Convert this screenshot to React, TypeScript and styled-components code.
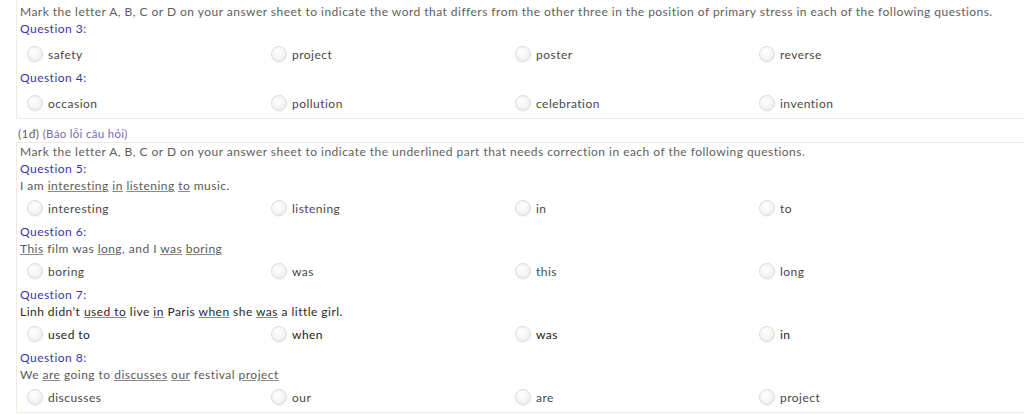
import React from "react";
import styled, { createGlobalStyle } from "styled-components";

const GlobalStyle = createGlobalStyle`
  body {
    margin: 0;
    background: #ffffff;
    font-family: "Lato", "Open Sans", sans-serif;
    font-size: 12px;
    letter-spacing: 0.47px;
    color: #555555;
  }
`;

const Page = styled.div`
  width: 1024px;
  height: 415px;
  overflow: hidden;
  padding-left: 16px;
  box-sizing: border-box;
`;

const ExerciseBox = styled.div<{ $first?: boolean }>`
  border: 1px solid #f2ebe0;
  border-right: none;
  border-top-color: ${(props) => (props.$first ? "transparent" : "#efeadf")};
  border-bottom-color: #f7e9e3;
  padding: ${(props) => (props.$first ? "2px" : "0")} 0 0 3px;
`;

const Line = styled.div`
  height: 17px;
  line-height: 17px;
  white-space: nowrap;
`;

const Instruction = styled(Line)`
  color: #5e5e5e;
`;

const QuestionTitle = styled(Line)`
  color: #3a36a8;
`;

const Sentence = styled(Line)<{ $dark?: boolean }>`
  color: ${(props) => (props.$dark ? "#2a2a2a" : "#5a5a5a")};
`;

const U = styled.span`
  text-decoration: underline;
  text-decoration-color: #8a8a8a;
  text-underline-offset: 1px;
`;

const OptionsRow = styled.div<{ $tight?: boolean }>`
  display: grid;
  grid-template-columns: repeat(4, 244px);
  padding: ${(props) => (props.$tight ? "4px" : "7px")} 0 5px 7px;
`;

const Option = styled.label<{ $dark?: boolean }>`
  display: flex;
  align-items: center;
  gap: 5px;
  height: 20px;
  color: ${(props) => (props.$dark ? "#222222" : "#484848")};
  cursor: pointer;
`;

const Radio = styled.span`
  width: 16px;
  height: 16px;
  border-radius: 50%;
  box-sizing: border-box;
  border: 1px solid #dcdcdc;
  background: radial-gradient(circle at 40% 35%, #ffffff 0%, #f4f4f4 55%, #e6e6e6 100%);
  box-shadow: 0 1px 1px rgba(0, 0, 0, 0.05);
  flex-shrink: 0;
`;

const ScoreLine = styled(Line)`
  margin: 6px 0 0 2px;
  color: #666666;
  font-size: 12px;
  letter-spacing: 0.3px;
`;

const ReportLink = styled.span`
  color: #8066b0;
  font-size: 11.5px;
`;

type Question = {
  number: number;
  sentence?: React.ReactNode;
  options: string[];
  dark?: boolean;
};

const stressQuestions: Question[] = [
  { number: 3, options: ["safety", "project", "poster", "reverse"] },
  { number: 4, options: ["occasion", "pollution", "celebration", "invention"] },
];

const errorQuestions: Question[] = [
  {
    number: 5,
    sentence: (
      <>
        I am <U>interesting</U> <U>in</U> <U>listening</U> <U>to</U> music.
      </>
    ),
    options: ["interesting", "listening", "in", "to"],
  },
  {
    number: 6,
    sentence: (
      <>
        <U>This</U> film was <U>long</U>, and I <U>was</U> <U>boring</U>
      </>
    ),
    options: ["boring", "was", "this", "long"],
  },
  {
    number: 7,
    dark: true,
    sentence: (
      <>
        Linh didn’t <U>used to</U> live <U>in</U> Paris <U>when</U> she <U>was</U> a little girl.
      </>
    ),
    options: ["used to", "when", "was", "in"],
  },
  {
    number: 8,
    sentence: (
      <>
        We <U>are</U> going to <U>discusses</U> <U>our</U> festival <U>project</U>
      </>
    ),
    options: ["discusses", "our", "are", "project"],
  },
];

const QuestionBlock = ({ question }: { question: Question }) => (
  <>
    <QuestionTitle>Question {question.number}:</QuestionTitle>
    {question.sentence && <Sentence $dark={question.dark}>{question.sentence}</Sentence>}
    <OptionsRow $tight={!!question.sentence}>
      {question.options.map((option) => (
        <Option key={option} $dark={question.dark}>
          <Radio />
          {option}
        </Option>
      ))}
    </OptionsRow>
  </>
);

const App = () => {
  return (
    <>
      <GlobalStyle />
      <Page>
        <ExerciseBox $first>
          <Instruction>
            Mark the letter A, B, C or D on your answer sheet to indicate the word that differs from the other three in
            the position of primary stress in each of the following questions.
          </Instruction>
          {stressQuestions.map((question) => (
            <QuestionBlock key={question.number} question={question} />
          ))}
        </ExerciseBox>
        <ScoreLine>
          (1đ) <ReportLink>(Báo lỗi câu hỏi)</ReportLink>
        </ScoreLine>
        <ExerciseBox>
          <Instruction>
            Mark the letter A, B, C or D on your answer sheet to indicate the underlined part that needs correction in
            each of the following questions.
          </Instruction>
          {errorQuestions.map((question) => (
            <QuestionBlock key={question.number} question={question} />
          ))}
        </ExerciseBox>
      </Page>
    </>
  );
};

export default App;
